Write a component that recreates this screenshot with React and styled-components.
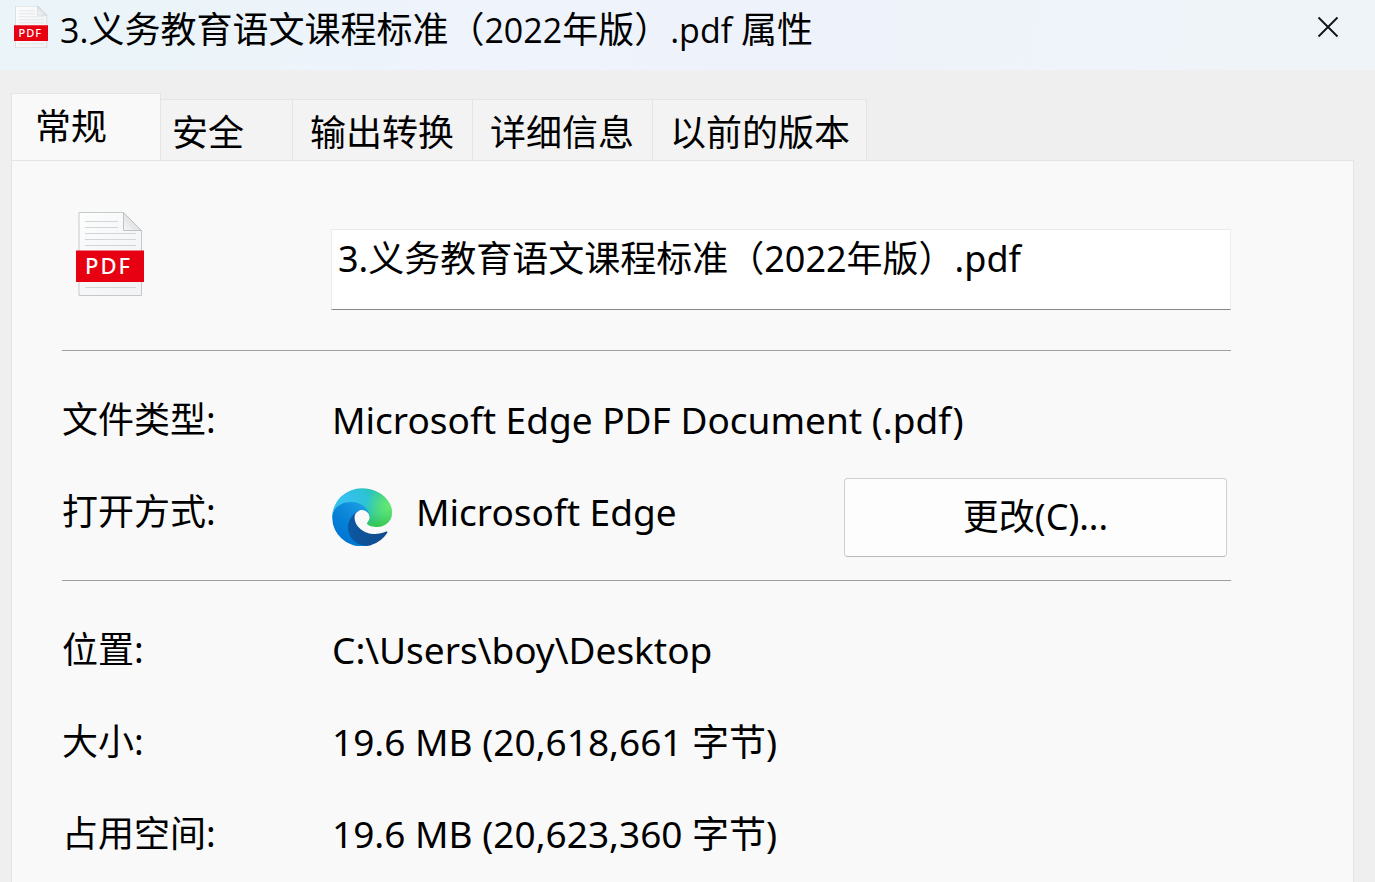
import React, { useState } from "react";
import styled, { createGlobalStyle } from "styled-components";

const GlobalStyle = createGlobalStyle`
  * {
    box-sizing: border-box;
  }

  body {
    margin: 0;
    background: #efefef;
    color: #000;
    font-family: "Noto Sans", "Noto Sans CJK SC", sans-serif;
    font-size: 36px;
    line-height: 48px;
  }

  button,
  input {
    color: inherit;
    font: inherit;
  }
`;

const Window = styled.div`
  display: flex;
  flex-direction: column;
  min-height: 100vh;
`;

const TitleBar = styled.header`
  display: flex;
  align-items: flex-start;
  height: 70px;
  padding: 6px 26px 0 14px;
  background: linear-gradient(100deg, #ebf4f8 0%, #ebf4f8 12%, #eef3fc 32%, #eef3fb 60%, #eef4f8 90%);
`;

const Title = styled.h1`
  flex: 1;
  margin: 0 0 0 12px;
  font-family: "Open Sans", "Noto Sans CJK SC", sans-serif;
  font-size: 36px;
  font-weight: 400;
  white-space: nowrap;
`;

const Latin = styled.span`
  font-size: 34px;
`;

const CloseButton = styled.button`
  display: flex;
  padding: 10px;
  border: 0;
  background: none;
`;

const TabList = styled.div`
  display: flex;
  align-items: flex-end;
  height: 91px;
  margin: 0 21px -1px 11px;
`;

const Tab = styled.button`
  height: ${(props) => (props.$active ? 68 : 62)}px;
  min-width: ${(props) => props.$width}px;
  padding: ${(props) => (props.$active ? 0 : 6)}px 14px 0 ${(props) => props.$indent}px;
  border: 1px solid #e4e4e4;
  border-left-width: ${(props) => (props.$active ? 1 : 0)}px;
  border-bottom-color: ${(props) => (props.$active ? "#f9f9f9" : "#e4e4e4")};
  background: ${(props) => (props.$active ? "#f9f9f9" : "#f3f3f3")};
  text-align: left;
  white-space: nowrap;
`;

const Panel = styled.main`
  flex: 1;
  margin: 0 21px 0 11px;
  padding: 50px 122px 0 50px;
  border: 1px solid #e4e4e4;
  border-bottom: 0;
  background: #f9f9f9;
`;

const FileHeader = styled.div`
  display: flex;
  height: 139px;
`;

const IconCell = styled.div`
  width: 269px;
  padding: 1px 0 0 14px;
`;

const NameInput = styled.input`
  flex: 1;
  min-width: 0;
  height: 81px;
  margin-top: 18px;
  padding: 0 6px 26px;
  border: 1px solid #ebebeb;
  border-bottom-color: #868686;
  outline: 0;
  background: #fff;
`;

const Section = styled.dl`
  margin: 0;
  padding: 23px 0 22px;
  border-top: 1px solid #a0a0a0;
`;

const Row = styled.div`
  display: flex;
  align-items: center;
  height: 92px;
`;

const Label = styled.dt`
  width: 270px;
`;

const Value = styled.dd`
  display: flex;
  flex: 1;
  align-items: center;
  gap: 24px;
  margin: 0;
  font-size: 37px;
  white-space: nowrap;
`;

const EdgeIcon = styled.svg`
  margin-top: 10px;
`;

const ChangeButton = styled.button`
  width: 383px;
  height: 79px;
  margin: 10px 4px 0 auto;
  border: 1px solid #d0d0d0;
  border-bottom-color: #bababa;
  border-radius: 4px;
  background: #fdfdfd;
  font-size: 36px;
`;

const PdfIcon = ({ width, height, id }) => (
  <svg width={width} height={height} viewBox="0 0 68 84" aria-hidden="true">
    <defs>
      <linearGradient id={`${id}-page`} x1="0" y1="0" x2="1" y2="1">
        <stop offset="0" stopColor="#fcfdfd" />
        <stop offset="1" stopColor="#f0f2f4" />
      </linearGradient>
      <linearGradient id={`${id}-fold`} x1="0" y1="1" x2="1" y2="0">
        <stop offset="0" stopColor="#f8f8f8" />
        <stop offset="1" stopColor="#c9cbcd" />
      </linearGradient>
    </defs>
    <path d="M3 .5H47.5L65.500 18.500V83.500H3Z" fill={`url(#${id}-page)`} stroke="#c6c9cc" />
    <path d="M47.500 .5V18.500H65.500Z" fill={`url(#${id}-fold)`} stroke="#bfc2c4" />
    <path d="M9 9.500H42M9 15.500H42M9 21.500H60M9 27.500H60M9 33.500H60M9 75.500H60" stroke="#d3d6d9" />
    <rect y="38.500" width="68" height="31.500" fill="#e60012" />
    <text x="9" y="62" fill="#fff" fontFamily="Noto Sans, sans-serif" fontSize="22" fontWeight="500" letterSpacing="2">
      PDF
    </text>
  </svg>
);

const EdgeLogo = () => (
  <EdgeIcon width="60" height="58" viewBox="4 4 257 255" preserveAspectRatio="none" aria-hidden="true">
    <defs>
      <linearGradient id="edge-navy" x1="63" y1="177" x2="241" y2="177" gradientUnits="userSpaceOnUse">
        <stop offset="0" stopColor="#0c59a4" />
        <stop offset="1" stopColor="#114a8b" />
      </linearGradient>
      <linearGradient id="edge-blue" x1="157" y1="95" x2="46" y2="216" gradientUnits="userSpaceOnUse">
        <stop offset="0" stopColor="#1b9de2" />
        <stop offset=".16" stopColor="#1595df" />
        <stop offset=".67" stopColor="#0680d7" />
        <stop offset="1" stopColor="#0078d4" />
      </linearGradient>
      <radialGradient
        id="edge-sky"
        cx="0"
        cy="0"
        r="1"
        gradientUnits="userSpaceOnUse"
        gradientTransform="translate(30 51) rotate(92.300) scale(202 431)"
      >
        <stop offset="0" stopColor="#35c1f1" />
        <stop offset=".11" stopColor="#34c1ed" />
        <stop offset=".23" stopColor="#2fc2df" />
        <stop offset=".31" stopColor="#2bc3d2" />
        <stop offset=".67" stopColor="#36c752" />
      </radialGradient>
      <radialGradient id="edge-green" cx="245" cy="82" r="97" gradientUnits="userSpaceOnUse">
        <stop offset="0" stopColor="#66eb6e" />
        <stop offset="1" stopColor="#66eb6e" stopOpacity="0" />
      </radialGradient>
    </defs>
    <path
      fill="url(#edge-navy)"
      d="M235.680 195.460a93.730 93.730 0 0 1-10.540 4.710 101.870 101.870 0 0 1-35.900 6.460c-47.320 0-88.540-32.550-88.540-74.320A31.480 31.480 0 0 1 117.130 105c-42.800 1.800-53.800 46.400-53.800 72.530 0 73.880 68.090 81.370 82.760 81.370 7.910 0 19.840-2.300 27-4.560l1.310-.44a128.340 128.340 0 0 0 66.600-52.800 4 4 0 0 0-5.320-5.640Z"
    />
    <path
      fill="url(#edge-blue)"
      d="M110.340 246.340A79.200 79.200 0 0 1 87.600 225a80.720 80.720 0 0 1 29.530-120c3.120-1.470 8.450-4.130 15.540-4a32.350 32.350 0 0 1 25.690 13 31.880 31.880 0 0 1 6.360 18.660c0-.21 24.460-79.600-80-79.600-43.900 0-80 41.660-80 78.210a130.150 130.150 0 0 0 12.110 56 128 128 0 0 0 156.380 67.110 75.550 75.550 0 0 1-62.780-8Z"
    />
    {["edge-sky", "edge-green"].map((fill) => (
      <path
        key={fill}
        fill={`url(#${fill})`}
        d="M156.940 153.780c-.81 1.050-3.300 2.500-3.300 5.660 0 2.610 1.700 5.120 4.720 7.230 14.380 10 41.490 8.680 41.560 8.680A59.560 59.560 0 0 0 230.190 167a61.380 61.380 0 0 0 30.430-52.880c.26-22.410-8-37.310-11.340-43.910C228.090 28.760 182.350 4.920 132.610 4.920a128 128 0 0 0-128 126.200c.48-36.540 36.800-66.050 80-66.050 3.500 0 23.460.34 42 10.070 16.340 8.580 24.900 18.940 30.850 29.210 6.180 10.670 7.280 24.150 7.280 29.520s-2.740 13.330-7.800 19.910Z"
      />
    ))}
  </EdgeIcon>
);

const tabs = [
  { name: "常规", width: 150, indent: 23 },
  { name: "安全", width: 132, indent: 11 },
  { name: "输出转换", width: 180, indent: 17 },
  { name: "详细信息", width: 180, indent: 17 },
  { name: "以前的版本", width: 214, indent: 17 },
];

const App = () => {
  const [activeTab, setActiveTab] = useState("常规");
  const [fileName, setFileName] = useState("3.义务教育语文课程标准（2022年版）.pdf");

  return (
    <Window>
      <GlobalStyle />
      <TitleBar>
        <PdfIcon id="title" width={34} height={42} />
        <Title>
          <Latin>3.</Latin>义务教育语文课程标准（<Latin>2022</Latin>年版）<Latin>.pdf </Latin>属性
        </Title>
        <CloseButton aria-label="关闭">
          <svg width="22" height="22" viewBox="0 0 22 22" stroke="#111" strokeWidth="1.800">
            <path d="M1.500 1.500L20.500 20.500M20.500 1.500L1.500 20.500" />
          </svg>
        </CloseButton>
      </TitleBar>
      <TabList role="tablist">
        {tabs.map((tab) => (
          <Tab
            key={tab.name}
            role="tab"
            aria-selected={tab.name === activeTab}
            $active={tab.name === activeTab}
            $width={tab.width}
            $indent={tab.indent}
            onClick={() => setActiveTab(tab.name)}
          >
            {tab.name}
          </Tab>
        ))}
      </TabList>
      <Panel>
        <FileHeader>
          <IconCell>
            <PdfIcon id="file" width={68} height={84} />
          </IconCell>
          <NameInput
            aria-label="文件名"
            value={fileName}
            onChange={(event) => setFileName(event.target.value)}
          />
        </FileHeader>
        <Section>
          <Row>
            <Label>文件类型:</Label>
            <Value>Microsoft Edge PDF Document (.pdf)</Value>
          </Row>
          <Row>
            <Label>打开方式:</Label>
            <Value>
              <EdgeLogo />
              Microsoft Edge
              <ChangeButton>更改(C)...</ChangeButton>
            </Value>
          </Row>
        </Section>
        <Section>
          <Row>
            <Label>位置:</Label>
            <Value>C:\Users\boy\Desktop</Value>
          </Row>
          <Row>
            <Label>大小:</Label>
            <Value>19.6 MB (20,618,661 字节)</Value>
          </Row>
          <Row>
            <Label>占用空间:</Label>
            <Value>19.6 MB (20,623,360 字节)</Value>
          </Row>
        </Section>
      </Panel>
    </Window>
  );
};

export default App;
